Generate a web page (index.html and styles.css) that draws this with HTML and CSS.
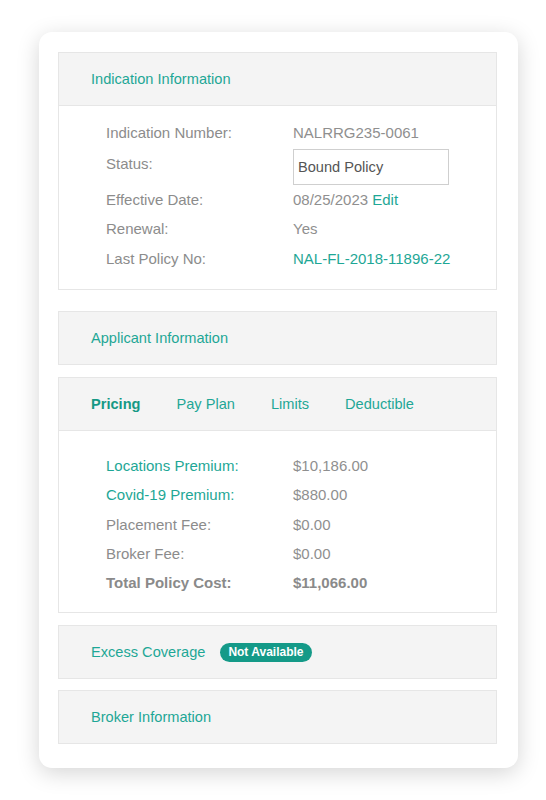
FILE: index.html
```html
<!DOCTYPE html>
<html>
<head>
<meta charset="utf-8">
<link rel="stylesheet" href="styles.css">
</head>
<body>
<div class="card">
  <section class="panel panel-first">
    <div class="panel-head"><span class="title">Indication Information</span></div>
    <div class="panel-body info-body">
      <div class="row"><span class="label">Indication Number:</span><span class="value">NALRRG235-0061</span></div>
      <div class="row row-status"><span class="label">Status:</span><span class="value"><span class="select">Bound Policy</span></span></div>
      <div class="row"><span class="label">Effective Date:</span><span class="value">08/25/2023 <a class="link">Edit</a></span></div>
      <div class="row"><span class="label">Renewal:</span><span class="value">Yes</span></div>
      <div class="row"><span class="label">Last Policy No:</span><span class="value"><a class="link">NAL-FL-2018-11896-22</a></span></div>
    </div>
  </section>

  <section class="panel">
    <div class="panel-head"><span class="title">Applicant Information</span></div>
  </section>

  <section class="panel">
    <div class="panel-head tabs">
      <span class="tab active">Pricing</span>
      <span class="tab">Pay Plan</span>
      <span class="tab">Limits</span>
      <span class="tab">Deductible</span>
    </div>
    <div class="panel-body price-body">
      <div class="row"><span class="label teal">Locations Premium:</span><span class="value">$10,186.00</span></div>
      <div class="row"><span class="label teal">Covid-19 Premium:</span><span class="value">$880.00</span></div>
      <div class="row"><span class="label">Placement Fee:</span><span class="value">$0.00</span></div>
      <div class="row"><span class="label">Broker Fee:</span><span class="value">$0.00</span></div>
      <div class="row total"><span class="label">Total Policy Cost:</span><span class="value">$11,066.00</span></div>
    </div>
  </section>

  <section class="panel">
    <div class="panel-head"><span class="title">Excess Coverage</span><span class="badge">Not Available</span></div>
  </section>

  <section class="panel panel-last">
    <div class="panel-head"><span class="title">Broker Information</span></div>
  </section>
</div>
</body>
</html>
```
FILE: styles.css
```css
* { box-sizing: border-box; }
html, body { margin: 0; padding: 0; background: #ffffff; }
body {
  font-family: "Liberation Sans", Arial, sans-serif;
  font-size: 15px;
  color: #8c8c8c;
  padding: 32px 28px 33px 39px;
}
.card {
  width: 479px;
  background: #ffffff;
  border-radius: 13px;
  box-shadow: 0 5px 22px rgba(0, 0, 0, 0.17);
  padding: 20px 21px 24px 19px;
}
.panel {
  border: 1px solid #e6e6e6;
  background: #ffffff;
  margin-top: 12px;
}
.panel-first { margin-top: 0; margin-bottom: 21px; }
.panel-last { margin-top: 11px; }
.panel-head {
  height: 52px;
  background: #f4f4f4;
  display: flex;
  align-items: center;
  padding-left: 32px;
}
.panel-body { border-top: 1px solid #e6e6e6; }
.title { color: #1ea796; font-size: 14.6px; }
.tab { color: #1ea796; font-size: 14.6px; margin-right: 36px; }
.tab.active { font-weight: bold; color: #169985; }
.row {
  display: flex;
  line-height: 29.5px;
  padding-left: 47px;
}
.label { width: 187px; flex: none; }
.value { color: #8f8f8f; }
.info-body { padding: 12px 0 16px; }
.row-status { height: 37px; line-height: 31px; }
.row-status .value { padding-top: 1px; }
.select {
  display: block;
  width: 156px;
  height: 36px;
  line-height: 34px;
  border: 1px solid #cfcfcf;
  padding-left: 4px;
  color: #555555;
  font-size: 14.6px;
}
.link { color: #1ea796; text-decoration: none; }
.teal { color: #1ea796; }
.price-body { padding: 20px 0 15px; }
.price-body .row { line-height: 29.3px; }
.total { font-weight: bold; color: #8a8a8a; }
.total .value { color: #8a8a8a; }
.badge {
  margin-left: 15px;
  background: #149a88;
  color: #ffffff;
  font-weight: bold;
  font-size: 12px;
  height: 19px;
  line-height: 19px;
  padding: 0 8px;
  border-radius: 10px;
}
```
